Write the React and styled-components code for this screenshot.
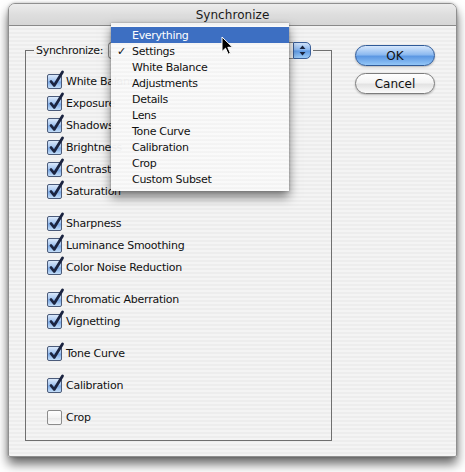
import React from 'react';
import styled, { createGlobalStyle } from 'styled-components';

const Global = createGlobalStyle`
  html, body { margin: 0; padding: 0; background: #ffffff; }
  body { font-family: "DejaVu Sans", "Liberation Sans", sans-serif; color: #111; }
`;

const Page = styled.div`
  width: 465px;
  height: 472px;
  box-sizing: border-box;
  padding: 3px 0 0 8px;
  overflow: hidden;
`;

const Window = styled.div`
  width: 449px;
  height: 454px;
  box-sizing: border-box;
  border: 1px solid #8f8f8f;
  border-radius: 7px 7px 2px 2px;
  background: repeating-linear-gradient(
    to bottom,
    #ededed 0px,
    #ededed 2px,
    #f4f4f4 2px,
    #f4f4f4 4px
  );
  box-shadow: 0 7px 11px rgba(0, 0, 0, 0.6), 0 0 3px rgba(0, 0, 0, 0.25);
  display: flex;
  flex-direction: column;
`;

const TitleBar = styled.div`
  height: 21px;
  flex: none;
  border-bottom: 1px solid #8a8a8a;
  border-radius: 6px 6px 0 0;
  background: linear-gradient(#ececec, #dedede 50%, #d6d6d6);
  display: flex;
  align-items: center;
  justify-content: center;
  font-size: 12px;
  color: #1a1a1a;
  letter-spacing: 0.05px;
`;

const Body = styled.div`
  display: flex;
  align-items: flex-start;
  padding: 16px 0 0 16px;
`;

const Group = styled.fieldset`
  margin: 0;
  padding: 0;
  width: 307px;
  box-sizing: border-box;
  border: 1px solid #6f6f6f;
  min-inline-size: 0;
`;

const Legend = styled.legend`
  margin-left: 8px;
  padding: 0 2px 0 2px;
  display: flex;
  align-items: center;
  height: 17px;
`;

const Label = styled.span`
  font-size: 11px;
  letter-spacing: -0.3px;
  width: 72px;
  white-space: nowrap;
`;

const PopupWrap = styled.div`
  position: relative;
  width: 203px;
  height: 17px;
  display: flex;
`;

const PopupBody = styled.div`
  flex: 1;
  box-sizing: border-box;
  border: 1px solid #8a8a8a;
  border-right: none;
  border-radius: 4px 0 0 4px;
  background: linear-gradient(#ffffff, #f2f2f2 50%, #e6e6e6 51%, #fbfbfb);
`;

const Stepper = styled.div`
  width: 18px;
  box-sizing: border-box;
  border: 1px solid #3b5f98;
  border-radius: 0 5px 5px 0;
  background: linear-gradient(#cfe2fa, #86b4ee 48%, #5d98e3 52%, #9ccbf7);
  display: flex;
  align-items: center;
  justify-content: center;
`;

const Menu = styled.div`
  position: absolute;
  left: 3px;
  top: -19px;
  width: 178px;
  box-sizing: border-box;
  padding: 4px 0;
  background: repeating-linear-gradient(
    to bottom,
    rgba(244, 244, 244, 0.96) 0px,
    rgba(244, 244, 244, 0.96) 2px,
    rgba(250, 250, 250, 0.96) 2px,
    rgba(250, 250, 250, 0.96) 4px
  );
  box-shadow: 0 6px 10px rgba(0, 0, 0, 0.5), 0 0 2px rgba(0, 0, 0, 0.3);
  z-index: 5;
`;

const MenuItem = styled.div`
  position: relative;
  height: 16px;
  line-height: 17px;
  padding-left: 21px;
  font-size: 11px;
  letter-spacing: -0.3px;
  color: ${(p) => (p.$active ? '#ffffff' : '#111')};
  background: ${(p) => (p.$active ? '#3d6fc2' : 'transparent')};
  white-space: nowrap;
`;

const Check = styled.span`
  position: absolute;
  left: 6px;
  top: 0;
  font-size: 11px;
`;

const Cursor = styled.svg`
  position: absolute;
  left: 110px;
  top: 13px;
  z-index: 6;
`;

const List = styled.div`
  padding: 11px 0 12px 21px;
  display: flex;
  flex-direction: column;
  gap: 10px;
`;

const Section = styled.div`
  display: flex;
  flex-direction: column;
`;

const Row = styled.div`
  height: 22px;
  display: flex;
  align-items: center;
  gap: 4px;
  font-size: 11px;
  letter-spacing: -0.25px;
  white-space: nowrap;
`;

const Box = styled.span`
  position: relative;
  width: 15px;
  height: 15px;
  box-sizing: border-box;
  border-radius: 2px;
  border: 1px solid ${(p) => (p.$on ? '#4b5b7a' : '#8c8c8c')};
  background: ${(p) =>
    p.$on
      ? 'linear-gradient(#dbe9fb, #9fc2ef 48%, #7aa8e5 52%, #c3ddf8)'
      : 'linear-gradient(#ffffff, #f3f3f3 50%, #e8e8e8 51%, #fbfbfb)'};
  flex: none;
`;

const Tick = styled.svg`
  position: absolute;
  left: 1px;
  top: -4px;
  overflow: visible;
`;

const Buttons = styled.div`
  margin: 3px 0 0 23px;
  display: flex;
  flex-direction: column;
  gap: 7px;
`;

const Button = styled.div`
  width: 80px;
  height: 21px;
  box-sizing: border-box;
  border-radius: 11px;
  display: flex;
  align-items: center;
  justify-content: center;
  font-size: 12px;
  color: #111;
  border: 1px solid ${(p) => (p.$primary ? '#2f5a98' : '#7c7c7c')};
  background: ${(p) =>
    p.$primary
      ? 'linear-gradient(#d6e7fc, #8dbaf0 45%, #5c98e3 55%, #93c6f7)'
      : 'linear-gradient(#ffffff, #f4f4f4 45%, #e3e3e3 55%, #fbfbfb)'};
  box-shadow: 0 1px 2px rgba(0, 0, 0, 0.25);
`;

const sections = [
  ['White Balance', 'Exposure', 'Shadows', 'Brightness', 'Contrast', 'Saturation'],
  ['Sharpness', 'Luminance Smoothing', 'Color Noise Reduction'],
  ['Chromatic Aberration', 'Vignetting'],
  ['Tone Curve'],
  ['Calibration'],
  ['Crop'],
];

const menuItems = [
  'Everything',
  'Settings',
  'White Balance',
  'Adjustments',
  'Details',
  'Lens',
  'Tone Curve',
  'Calibration',
  'Crop',
  'Custom Subset',
];

function CheckBox({ on }) {
  return (
    <Box $on={on}>
      {on && (
        <Tick width="15" height="17" viewBox="0 0 15 17">
          <path
            d="M2 10.5 L5.2 14.5 L13.5 1"
            fill="none"
            stroke="#1b2440"
            strokeWidth="2.8"
            strokeLinecap="round"
            strokeLinejoin="round"
          />
        </Tick>
      )}
    </Box>
  );
}

export default function App() {
  return (
    <>
      <Global />
      <Page>
        <Window>
          <TitleBar>Synchronize</TitleBar>
          <Body>
            <Group>
              <Legend>
                <Label>Synchronize:</Label>
                <PopupWrap>
                  <PopupBody />
                  <Stepper>
                    <svg width="7" height="11" viewBox="0 0 7 11">
                      <path d="M3.5 0.5 L6.5 4 L0.5 4 Z" fill="#1a2540" />
                      <path d="M3.5 10.5 L6.5 7 L0.5 7 Z" fill="#1a2540" />
                    </svg>
                  </Stepper>
                  <Menu>
                    {menuItems.map((m, i) => (
                      <MenuItem key={m} $active={i === 0}>
                        {i === 1 && <Check>✓</Check>}
                        {m}
                      </MenuItem>
                    ))}
                    <Cursor width="13" height="20" viewBox="0 0 13 20">
                      <path
                        d="M1 1 L1 15.5 L4.5 12.2 L7.2 18.2 L9.4 17.2 L6.8 11.3 L11.6 11.3 Z"
                        fill="#000"
                        stroke="#fff"
                        strokeWidth="1"
                        strokeLinejoin="round"
                      />
                    </Cursor>
                  </Menu>
                </PopupWrap>
              </Legend>
              <List>
                {sections.map((sec, si) => (
                  <Section key={si}>
                    {sec.map((name) => (
                      <Row key={name}>
                        <CheckBox on={name !== 'Crop'} />
                        {name}
                      </Row>
                    ))}
                  </Section>
                ))}
              </List>
            </Group>
            <Buttons>
              <Button $primary>OK</Button>
              <Button>Cancel</Button>
            </Buttons>
          </Body>
        </Window>
      </Page>
    </>
  );
}
